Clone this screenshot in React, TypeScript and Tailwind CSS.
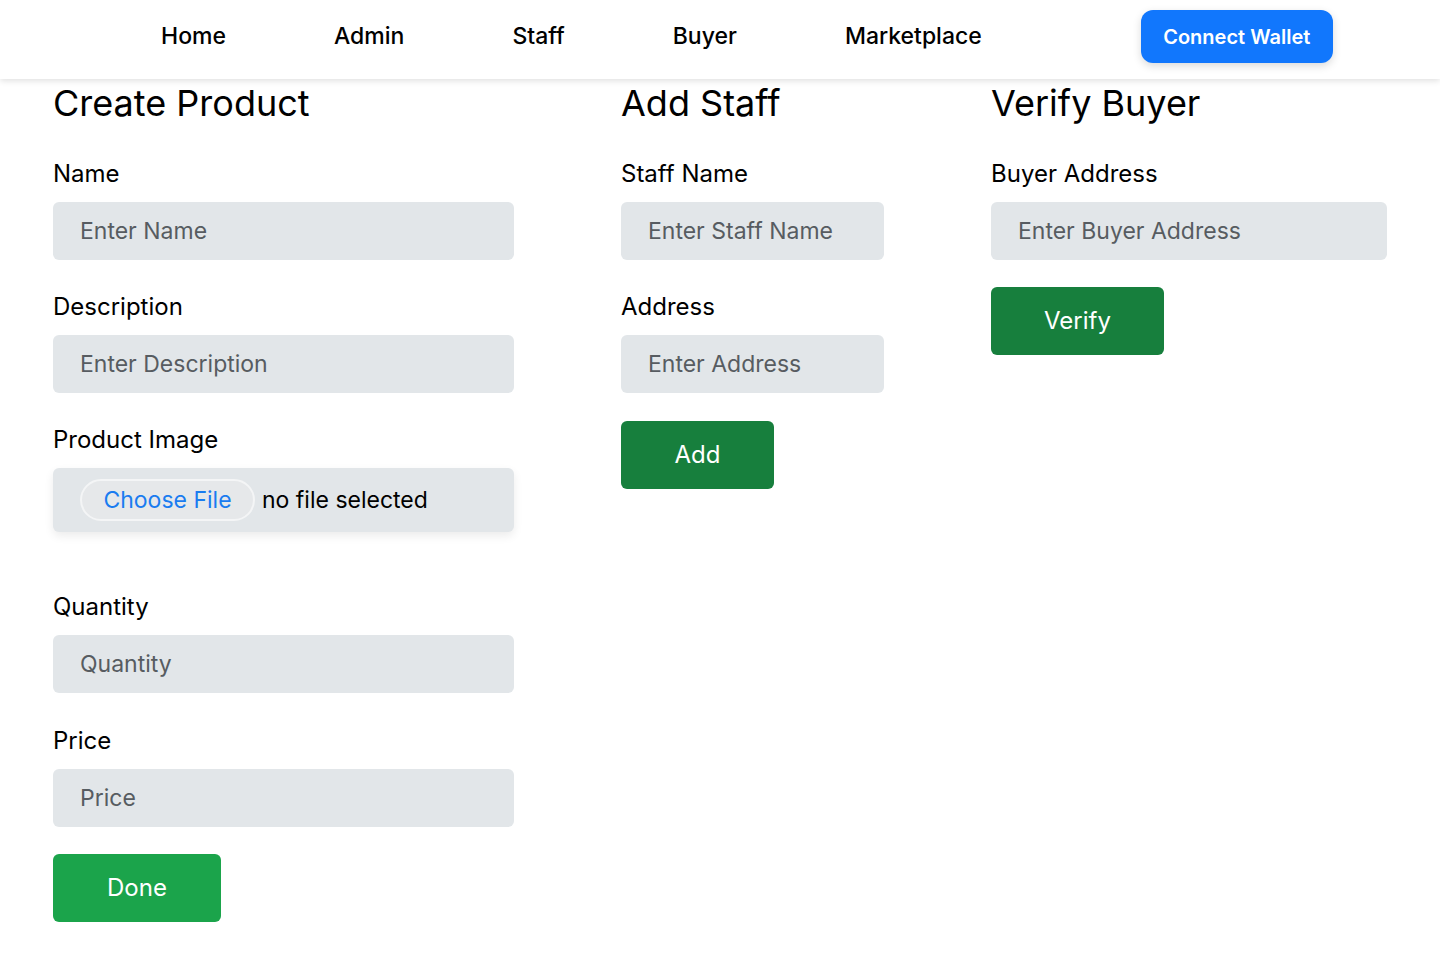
import { useState } from "react";

const font = { fontFamily: "Inter, 'Noto Sans', sans-serif" };

function Field({
  label,
  placeholder,
  className = "",
}: {
  label: string;
  placeholder: string;
  className?: string;
}) {
  return (
    <div className={className}>
      <label className="block text-[24px] leading-[29px] text-black">{label}</label>
      <input
        type="text"
        placeholder={placeholder}
        className="mt-[14px] block h-[58px] w-full rounded-[6px] bg-[#e2e6e9] px-[27px] text-[23px] text-black outline-none placeholder:text-[#575c61]"
      />
    </div>
  );
}

export default function App() {
  const [fileName] = useState<string | null>(null);

  return (
    <div className="min-h-[974px] bg-white" style={font}>
      {/* Nav */}
      <nav className="relative z-10 flex h-[79px] items-start bg-white pl-[161px] pt-[10px] shadow-[0_2px_6px_rgba(0,0,0,0.12)]">
        <div className="flex items-center gap-[108px] text-[23px] font-medium leading-[53px] text-black">
          <a>Home</a>
          <a>Admin</a>
          <a>Staff</a>
          <a>Buyer</a>
          <a>Marketplace</a>
        </div>
        <button
          type="button"
          className="ml-[159px] h-[53px] w-[192px] rounded-[12px] bg-[#1177fd] text-[20px] font-semibold text-white shadow-[0_3px_8px_rgba(0,0,0,0.15)]"
        >
          Connect Wallet
        </button>
      </nav>

      <main className="flex gap-[107px] px-[53px] pt-[1px]">
        {/* Create Product */}
        <section className="w-[461px]">
          <h2 className="text-[36px] leading-[46px] text-black">Create Product</h2>
          <Field className="mt-[33px]" label="Name" placeholder="Enter Name" />
          <Field className="mt-[32px]" label="Description" placeholder="Enter Description" />
          <div className="mt-[32px]">
            <label className="block text-[24px] leading-[29px] text-black">Product Image</label>
            <div className="mt-[14px] flex h-[64px] items-center rounded-[6px] bg-[#e2e6e9] pl-[27px] shadow-[0_4px_10px_rgba(0,0,0,0.08)]">
              <span className="flex h-[42px] w-[175px] items-center justify-center rounded-full border-2 border-[#f4f5f6] bg-[#e6e8ea] text-[23px] text-[#1a7cf0]">
                Choose File
              </span>
              <span className="ml-[7px] text-[23px] text-black">{fileName ?? "no file selected"}</span>
            </div>
          </div>
          <Field className="mt-[60px]" label="Quantity" placeholder="Quantity" />
          <Field className="mt-[33px]" label="Price" placeholder="Price" />
          <button
            type="button"
            className="mt-[27px] h-[68px] w-[168px] rounded-[6px] bg-[#1ba44b] text-[24px] text-white"
          >
            Done
          </button>
        </section>

        {/* Add Staff */}
        <section className="w-[263px]">
          <h2 className="text-[36px] leading-[46px] text-black">Add Staff</h2>
          <Field className="mt-[33px]" label="Staff Name" placeholder="Enter Staff Name" />
          <Field className="mt-[32px]" label="Address" placeholder="Enter Address" />
          <button
            type="button"
            className="mt-[28px] h-[68px] w-[153px] rounded-[6px] bg-[#177f3d] text-[24px] text-white"
          >
            Add
          </button>
        </section>

        {/* Verify Buyer */}
        <section className="w-[396px]">
          <h2 className="text-[36px] leading-[46px] text-black">Verify Buyer</h2>
          <Field className="mt-[33px]" label="Buyer Address" placeholder="Enter Buyer Address" />
          <button
            type="button"
            className="mt-[27px] h-[68px] w-[173px] rounded-[6px] bg-[#177f3d] text-[24px] text-white"
          >
            Verify
          </button>
        </section>
      </main>
    </div>
  );
}
